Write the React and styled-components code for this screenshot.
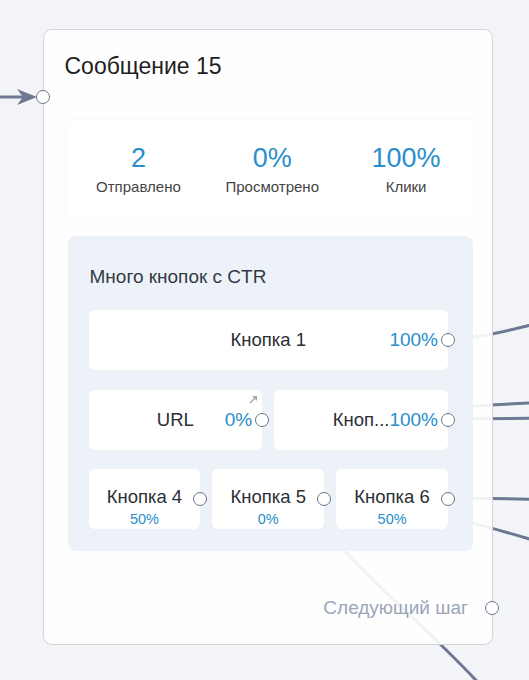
import React from 'react';
import styled, { createGlobalStyle } from 'styled-components';

const GlobalStyle = createGlobalStyle`
  html, body {
    margin: 0;
    padding: 0;
    background: #f3f4f7;
    font-family: "Liberation Sans", Arial, sans-serif;
  }
`;

const Canvas = styled.div`
  position: relative;
  width: 529px;
  height: 680px;
  overflow: hidden;
  background: #f3f4f7;
`;

const Edges = styled.svg`
  position: absolute;
  left: 0;
  top: 0;
  width: 529px;
  height: 680px;
`;

const Node = styled.div`
  position: absolute;
  left: 43px;
  top: 29px;
  width: 450px;
  height: 616px;
  box-sizing: border-box;
  border: 1.5px solid #d3d5d9;
  border-radius: 9px;
  background: rgba(255, 255, 255, 0.9);
  display: flex;
  flex-direction: column;
  padding: 22px 19px 0 23.5px;
`;

const Port = styled.span`
  position: absolute;
  width: 14px;
  height: 14px;
  box-sizing: border-box;
  border: 1.8px solid #6b7487;
  border-radius: 50%;
  background: #fff;
`;

const InPort = styled(Port)`
  left: -8px;
  top: 60px;
`;

const OutPort = styled(Port)`
  right: -7px;
  top: 50%;
  transform: translateY(-50%);
`;

const Title = styled.div`
  font-size: 23px;
  line-height: 28px;
  color: #1f1f1f;
  margin-left: -3px;
`;

const Stats = styled.div`
  margin-top: 40px;
  height: 98px;
  display: grid;
  grid-template-columns: 1fr 1fr 1fr;
  align-items: center;
  padding-left: 4px;
  background: #fff;
  border-radius: 4px;
  box-shadow: 0 0 5px rgba(40, 60, 100, 0.035);
`;

const Stat = styled.div`
  display: flex;
  flex-direction: column;
  align-items: center;
  gap: 5px;
`;

const StatValue = styled.div`
  font-size: 27px;
  line-height: 30px;
  color: #2a8dcc;
`;

const StatLabel = styled.div`
  font-size: 15px;
  line-height: 18px;
  color: #444;
`;

const Panel = styled.div`
  margin-top: 18px;
  background: #edf2f9;
  border-radius: 7px;
  padding: 30px 25px 22px 21px;
  display: flex;
  flex-direction: column;
`;

const PanelTitle = styled.div`
  font-size: 19px;
  line-height: 22px;
  color: #333a44;
  margin: 0 0 22px 1px;
`;

const Rows = styled.div`
  display: flex;
  flex-direction: column;
  gap: 19.5px;
`;

const Row = styled.div`
  display: grid;
  grid-template-columns: repeat(${p => p.$cols}, 1fr);
  gap: 12px;
`;

const Button = styled.div`
  position: relative;
  height: 60px;
  background: #fff;
  border-radius: 6px;
  display: flex;
  align-items: center;
  justify-content: center;
  padding: ${p => (p.$stacked ? '0 8px 5px' : '0 56px')};
  box-sizing: border-box;
  min-width: 0;
`;

const Label = styled.div`
  font-size: 18.5px;
  line-height: 22px;
  color: #2b2f36;
  white-space: nowrap;
`;

const Ctr = styled.div`
  position: absolute;
  right: 10px;
  top: 50%;
  transform: translateY(-50%);
  font-size: 19px;
  color: #2a8dcc;
`;

const SubCtr = styled.div`
  position: absolute;
  left: 0;
  right: 0;
  bottom: 2px;
  text-align: center;
  font-size: 14.5px;
  line-height: 16px;
  color: #2a8dcc;
`;

const LinkMark = styled.svg`
  position: absolute;
  right: 4px;
  top: 5px;
  width: 9px;
  height: 9px;
`;

const Footer = styled.div`
  position: relative;
  margin-top: auto;
  margin-bottom: 25px;
  display: flex;
  justify-content: flex-end;
  align-items: center;
  height: 22px;
  padding-right: 5px;
`;

const NextLabel = styled.div`
  font-size: 19px;
  color: #9ba6b9;
`;

const NextPort = styled(Port)`
  right: -26px;
  top: 50%;
  transform: translateY(-50%);
`;

const buttons = [
  [{ label: 'Кнопка 1', ctr: '100%' }],
  [
    { label: 'URL', ctr: '0%', link: true },
    { label: 'Кнопка 2', ctr: '100%' },
  ],
  [
    { label: 'Кнопка 4', ctr: '50%' },
    { label: 'Кнопка 5', ctr: '0%' },
    { label: 'Кнопка 6', ctr: '50%' },
  ],
];

const stats = [
  { value: '2', label: 'Отправлено' },
  { value: '0%', label: 'Просмотрено' },
  { value: '100%', label: 'Клики' },
];

// half-width buttons only fit a few characters next to the CTR
const shorten = (text, max) => (text.length > max ? text.slice(0, max - 3) + '...' : text);

export default function App() {
  return (
    <>
      <GlobalStyle />
      <Canvas>
        <Edges viewBox="0 0 529 680">
          <g fill="none" stroke="#6d7891" strokeWidth="3" strokeLinecap="round">
            <path d="M0 97 L26 97" />
            <path d="M447 339 C 480 339, 500 332, 560 318" />
            <path d="M262 419 C 350 419, 420 406, 560 402" />
            <path d="M447 419 L 560 418" />
            <path d="M447 498 C 490 498, 520 499, 560 500" />
            <path d="M323 498 C 390 500, 450 515, 560 548" />
            <path d="M200 498 C 280 498, 320 525, 345 551 C 380 590, 440 640, 485 690" />
          </g>
          <polygon points="17,89 37,97 17,105 23,97" fill="#6d7891" />
        </Edges>
        <Node>
          <InPort />
          <Title>Сообщение 15</Title>
          <Stats>
            {stats.map(s => (
              <Stat key={s.label}>
                <StatValue>{s.value}</StatValue>
                <StatLabel>{s.label}</StatLabel>
              </Stat>
            ))}
          </Stats>
          <Panel>
            <PanelTitle>Много кнопок с CTR</PanelTitle>
            <Rows>
              {buttons.map((row, i) => (
                <Row key={i} $cols={row.length}>
                  {row.map(b =>
                    row.length === 3 ? (
                      <Button key={b.label} $stacked>
                        <Label>{b.label}</Label>
                        <SubCtr>{b.ctr}</SubCtr>
                        <OutPort />
                      </Button>
                    ) : (
                      <Button key={b.label}>
                        <Label>{row.length === 2 ? shorten(b.label, 7) : b.label}</Label>
                        <Ctr>{b.ctr}</Ctr>
                        {b.link && (
                          <LinkMark viewBox="0 0 9 9">
                            <path d="M1 8 L7.5 1.5" stroke="#a3a9b3" strokeWidth="1.4" fill="none" />
                            <path d="M3 1 L8 1 L8 6 Z" fill="#a3a9b3" />
                          </LinkMark>
                        )}
                        <OutPort />
                      </Button>
                    )
                  )}
                </Row>
              ))}
            </Rows>
          </Panel>
          <Footer>
            <NextLabel>Следующий шаг</NextLabel>
            <NextPort />
          </Footer>
        </Node>
      </Canvas>
    </>
  );
}
